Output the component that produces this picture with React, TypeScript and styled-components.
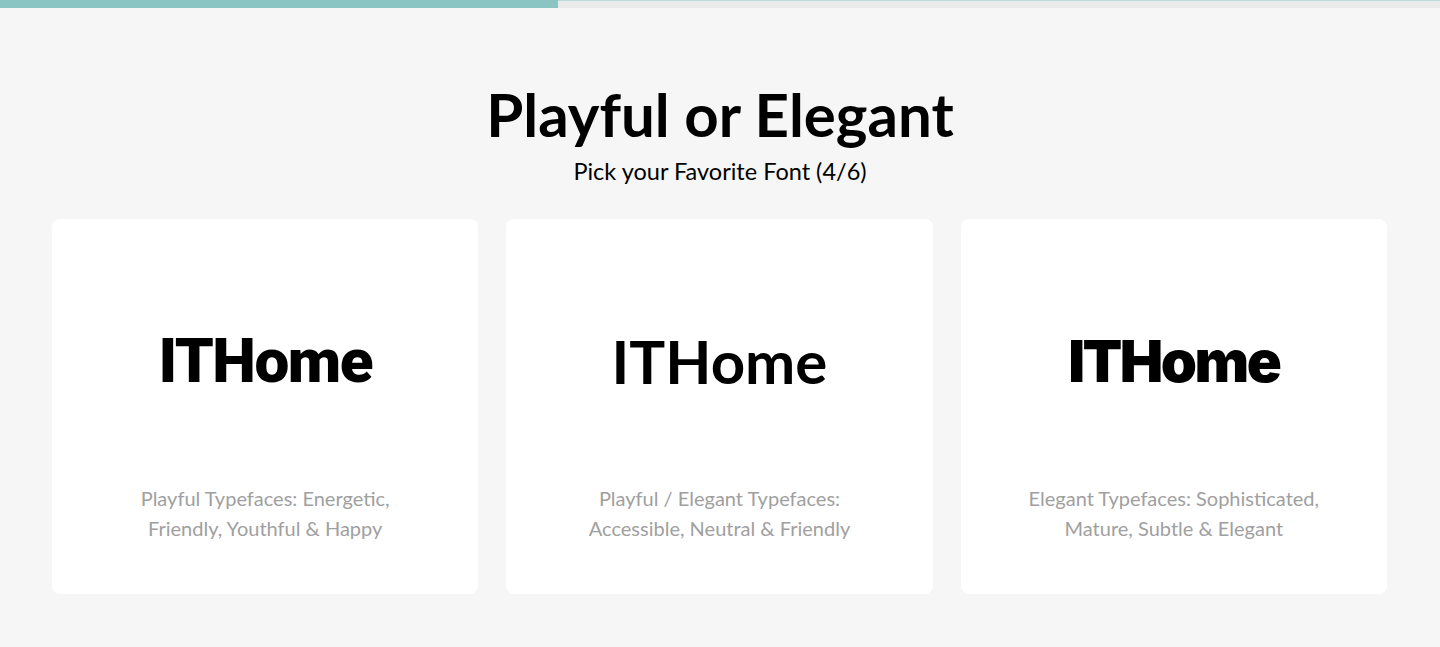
import React from "react";
import styled, { createGlobalStyle } from "styled-components";

const Global = createGlobalStyle`
  html, body { margin: 0; padding: 0; background: #f6f6f6; }
  body { font-family: "Lato", "Open Sans", sans-serif; color: #000; }
`;

const Page = styled.div`
  min-height: 647px;
  background: #f6f6f6;
  display: flex;
  flex-direction: column;
`;

const Progress = styled.div`
  height: 8px;
  background: #e9eaea;
  border-top: 1px solid #b9dcdb;
  box-sizing: border-box;
  position: relative;
`;

const ProgressFill = styled.div`
  position: absolute;
  left: 0;
  top: -1px;
  height: 8px;
  background: #8bc5c3;
`;

const Header = styled.header`
  display: flex;
  flex-direction: column;
  align-items: center;
  padding-top: 71px;
`;

const Title = styled.h1`
  margin: 0;
  font-family: "Lato", sans-serif;
  font-weight: 700;
  font-size: 60px;
  line-height: 70px;
`;

const Subtitle = styled.p`
  margin: 8px 0 0;
  font-family: "Lato", sans-serif;
  font-weight: 400;
  font-size: 23.5px;
  line-height: 28px;
`;

const Grid = styled.div`
  display: grid;
  grid-template-columns: repeat(3, 1fr);
  gap: 28px;
  padding: 34px 53px 0 52px;
`;

const Card = styled.button`
  all: unset;
  box-sizing: border-box;
  height: 375px;
  background: #fff;
  border-radius: 8px;
  display: flex;
  flex-direction: column;
  align-items: center;
  cursor: pointer;
  padding-top: 108px;
`;

const Logo = styled.div<{ $family: string; $weight: number; $size: number; $spacing: number }>`
  font-family: ${(p) => p.$family};
  font-weight: ${(p) => p.$weight};
  font-size: ${(p) => p.$size}px;
  letter-spacing: ${(p) => p.$spacing}px;
  line-height: 68px;
  height: 68px;
  color: #000;
`;

const Desc = styled.p`
  margin: 88px 0 0;
  font-family: "Lato", sans-serif;
  font-size: 20px;
  line-height: 30px;
  color: #a0a0a0;
  text-align: center;
`;

const cards = [
  { family: '"Roboto", sans-serif', weight: 900, size: 62, spacing: -1.5, lines: ["Playful Typefaces: Energetic,", "Friendly, Youthful & Happy"] },
  { family: '"Lato", sans-serif', weight: 700, size: 60, spacing: 0, lines: ["Playful / Elegant Typefaces:", "Accessible, Neutral & Friendly"] },
  { family: '"Inter", sans-serif', weight: 900, size: 58, spacing: -2.5, lines: ["Elegant Typefaces: Sophisticated,", "Mature, Subtle & Elegant"] },
];

export default function App() {
  return (
    <Page>
      <Global />
      <Progress>
        <ProgressFill style={{ width: "558px" }} />
      </Progress>
      <Header>
        <Title>Playful or Elegant</Title>
        <Subtitle>Pick your Favorite Font (4/6)</Subtitle>
      </Header>
      <Grid>
        {cards.map((c, i) => (
          <Card key={i}>
            <Logo $family={c.family} $weight={c.weight} $size={c.size} $spacing={c.spacing}>
              ITHome
            </Logo>
            <Desc>
              {c.lines[0]}
              <br />
              {c.lines[1]}
            </Desc>
          </Card>
        ))}
      </Grid>
    </Page>
  );
}
